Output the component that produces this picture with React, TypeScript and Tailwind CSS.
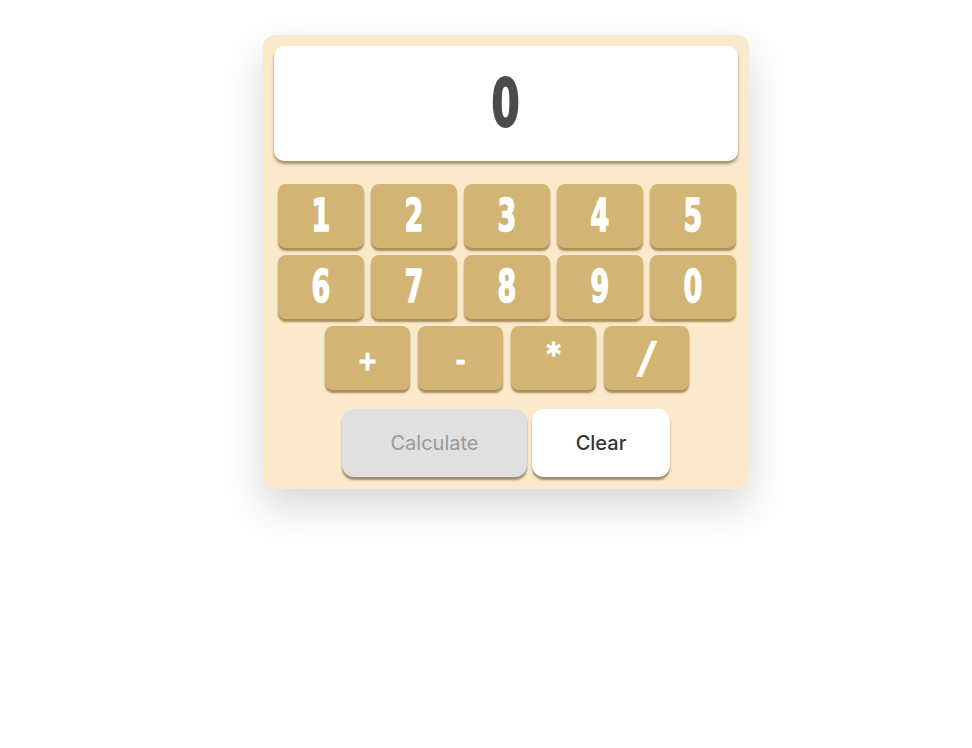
import React, { useState } from 'react';

const DIGITS = ['1', '2', '3', '4', '5', '6', '7', '8', '9', '0'];
const OPS = ['+', '-', '*', '/'];

const keyFont = { fontFamily: '"DejaVu Sans Condensed", "Liberation Sans", sans-serif' };
const textFont = { fontFamily: 'Inter, "Open Sans", sans-serif' };

export default function App() {
  const [value, setValue] = useState('0');

  const press = (k: string) => setValue(v => (v === '0' ? k : v + k));

  return (
    <div className="min-h-screen bg-white flex justify-center pt-[35px] pl-[40px]">
      <div className="w-[486px] h-[454px] bg-[#fbe9cc] rounded-[12px] p-[11px] shadow-[0_18px_40px_rgba(0,0,0,0.16)] flex flex-col">
        {/* Display */}
        <div className="h-[115px] bg-white rounded-[10px] shadow-[0_3px_3px_rgba(120,100,60,0.65)] flex items-center justify-center">
          <span
            className="text-[#4b4b4b] text-[66px] leading-none font-bold inline-block scale-x-[0.68] [-webkit-text-stroke:2px_#4b4b4b]"
            style={keyFont}
          >
            {value}
          </span>
        </div>

        {/* Keypad */}
        <div className="mt-[23px] pl-[4px] pr-[2px] grid grid-cols-5 gap-x-[7px] gap-y-[7px]">
          {DIGITS.map(d => (
            <button
              key={d}
              onClick={() => press(d)}
              className="h-[64px] bg-[#d2b574] rounded-[8px] shadow-[0_3px_2px_rgba(140,110,50,0.75)] flex items-center justify-center"
            >
              <span
                className="text-white text-[44px] leading-none font-bold inline-block scale-x-[0.68] [-webkit-text-stroke:1.5px_white]"
                style={keyFont}
              >
                {d}
              </span>
            </button>
          ))}
        </div>
        <div className="mt-[7px] pl-[2px] flex justify-center gap-[8px]">
          {OPS.map(o => (
            <button
              key={o}
              onClick={() => press(o)}
              className="w-[85px] h-[64px] bg-[#d2b574] rounded-[8px] shadow-[0_3px_2px_rgba(140,110,50,0.75)] flex items-center justify-center"
            >
              <span
                className={
                  o === '/'
                    ? 'text-white text-[42px] leading-none font-bold inline-block skew-x-[-8deg] [-webkit-text-stroke:1.5px_white]'
                    : o === '*'
                    ? 'text-white text-[30px] leading-none font-bold inline-block -translate-y-[4px] [-webkit-text-stroke:1px_white]'
                    : 'text-white text-[26px] leading-none font-bold inline-block translate-y-[3px] [-webkit-text-stroke:1px_white]'
                }
                style={keyFont}
              >
                {o}
              </span>
            </button>
          ))}
        </div>

        {/* Actions */}
        <div className="mt-[19px] flex justify-center gap-[5px]">
          <button
            className="w-[185px] h-[68px] bg-[#e0e0e0] rounded-[12px] shadow-[0_3px_2px_rgba(120,100,70,0.7)] text-[#9a9a9a] text-[20px]"
            style={textFont}
          >
            Calculate
          </button>
          <button
            onClick={() => setValue('0')}
            className="w-[138px] h-[68px] bg-white rounded-[12px] shadow-[0_3px_2px_rgba(120,100,70,0.7)] text-[#333333] text-[20px] font-medium"
            style={textFont}
          >
            Clear
          </button>
        </div>
      </div>
    </div>
  );
}
